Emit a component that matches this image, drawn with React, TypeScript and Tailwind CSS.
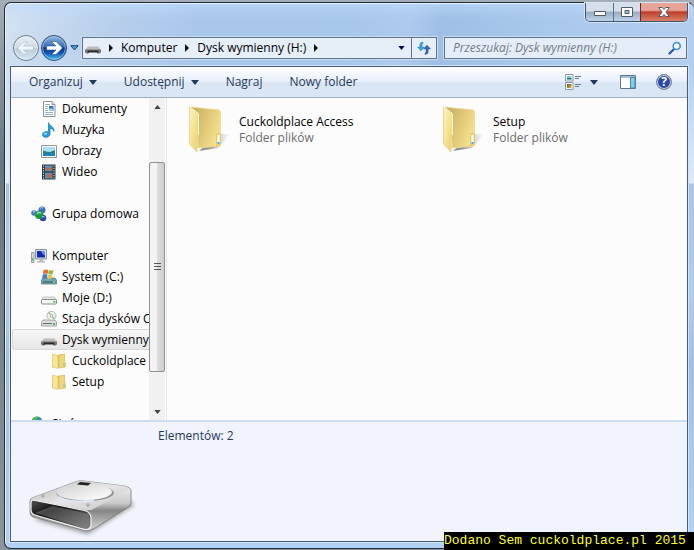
import type { ReactNode } from "react";

type IconName =
  | "document" | "music" | "picture" | "video" | "group" | "computer"
  | "system" | "disk" | "cd" | "removable" | "folder" | "network";

function DownArrow({ className }: { className: string }) {
  return (
    <svg viewBox="0 0 8 5" className={className} fill="currentColor" aria-hidden="true">
      <path d="M0 0H8L4 5Z" />
    </svg>
  );
}

function Crumb() {
  return (
    <svg viewBox="0 0 4 8" className="h-2 w-1 shrink-0" aria-hidden="true">
      <path d="M0 0L4 4L0 8Z" fill="#111" />
    </svg>
  );
}

const drawings: Record<IconName, ReactNode> = {
  document: (
    <>
      <path d="M2.500 .5H11L14 3.500V15.500H2.500Z" fill="#fff" stroke="#8b929a" />
      <path d="M11 .5V3.500H14" fill="#dde3e9" stroke="#8b929a" />
      <path d="M4 3.500H9M4 5.500H7M4 7.500H7M4 9.500H7M4 11.500H12M4 13.500H12" stroke="#9aaec4" />
      <path d="M8 5H12.500V10H8Z" fill="#3f78b8" />
      <path d="M8 8L10 7L12.500 9V10H8Z" fill="#9bcbea" />
    </>
  ),
  music: (
    <>
      <path d="M7.500 .5C8 4 13.500 4 13 9.500C12.500 8 11 6.500 9 6.500V12.500C8.500 16 1.500 16.500 1.500 12.500C2 9.500 5.500 9 7.500 10Z" fill="#279bdd" stroke="#1679bb" strokeWidth=".7" />
      <ellipse cx="4.500" cy="11.800" rx="1.800" ry="1.200" fill="#84d1f6" />
    </>
  ),
  picture: (
    <>
      <path d="M.5 2.500H15.500V14.500H.5Z" fill="#fff" stroke="#8d969f" />
      <path d="M2 4H14V13H2Z" fill="#a9e0f5" />
      <path d="M2 7.500L5 8.500L9 9L14 7V13H2Z" fill="#2b8170" />
      <path d="M2 10.500L14 9.500V13H2Z" fill="#237fbe" />
    </>
  ),
  video: (
    <>
      <path d="M1 .5H14.500V15.500H1Z" fill="#303941" />
      <path d="M4 1.500H11.500V7.300H4Z" fill="#4e99c9" />
      <path d="M4 8.700H11.500V14.500H4Z" fill="#4e99c9" />
      <path d="M5 3L8 4L11 2.500V7L8 5.500L5 7ZM5 13L7 9L9 11L11 9V13L8 14Z" fill="#be6546" />
      <path d="M2.500 1.500V15M13 1.500V15" stroke="#dce2e4" strokeDasharray="1.200 1.200" />
    </>
  ),
  group: (
    <>
      <path d="M3 7L11 4L12 12Z" fill="none" stroke="#9fb5ce" strokeWidth="2" />
      <circle cx="3" cy="7" r="2.800" fill="#4679c9" />
      <circle cx="11" cy="4" r="3.500" fill="#416fbe" />
      <circle cx="12" cy="12" r="3.300" fill="#294da7" />
      <circle cx="8" cy="9" r="4" fill="#1b9a3e" />
      <path d="M6 8Q7 5.500 10 7" fill="none" stroke="#9be899" strokeWidth="1.400" />
      <path d="M9 2.500Q10 1 12 2M2 6Q3 5 4 6M11 11Q12 10 13.500 11" fill="none" stroke="#c3dcfa" />
    </>
  ),
  computer: (
    <>
      <path d="M.5 4.500H3V14.500H.5Z" fill="#d7dcde" stroke="#969fa4" />
      <path d="M4.500 1.500H15.500V11H4.500Z" fill="#d8dfe5" stroke="#89949e" />
      <path d="M6 3H14V9.500H6Z" fill="#142cad" />
      <path d="M10 3H14V7.500Q11 6 10 3Z" fill="#6e91e5" />
      <path d="M8.500 11H12V13H14V14.500H6V13H8.500Z" fill="#b3bbc1" />
      <path d="M1.200 10H2.200V13H1.200Z" fill="#47b44f" />
    </>
  ),
  system: (
    <>
      <path d="M2 9H14L15.500 11V15H.5V11Z" fill="#76a3b4" stroke="#48727d" strokeWidth=".7" />
      <path d="M2 12H14.500V14H2Z" fill="#537985" />
      <path d="M12 12H14V14H12Z" fill="#61d963" />
      <path d="M2.500 1Q5 0 7.500 1L6.700 5Q4.500 4 2 5Z" fill="#e87036" />
      <path d="M8 1Q10 2 12.500 1L11.500 5Q9.500 6 7.200 5Z" fill="#8aba41" />
      <path d="M1.800 5.500Q4 4.500 6.500 5.500L5.700 9.500Q3.500 8.500 1 9.500Z" fill="#3c83c9" />
      <path d="M7 5.500Q9 6.500 11.500 5.500L10.500 9.500Q8.500 10.500 6.200 9.500Z" fill="#efc23b" />
    </>
  ),
  disk: (
    <>
      <path d="M3 7H13L15.500 9.500V13.500H.5V9.500Z" fill="#e4e6e6" stroke="#a5a8aa" strokeWidth=".6" />
      <path d="M1.500 9.500H14.500Q15.500 9.500 15.500 10.500V13Q15.500 14 14.500 14H1.500Q.5 14 .5 13V10.500Q.5 9.500 1.500 9.500Z" fill="#f3f4f4" stroke="#7f8589" strokeWidth=".9" />
      <path d="M12 11H14.500V12.500H12Z" fill="#43cf4c" />
    </>
  ),
  cd: (
    <>
      <path d="M2 9H14L15.500 11V15H.5V11Z" fill="#ddd" stroke="#888" strokeWidth=".7" />
      <path d="M2 12.500H11" stroke="#646a6c" />
      <path d="M12 12H14V14H12Z" fill="#49bf4a" />
      <circle cx="10.500" cy="4.800" r="4.500" fill="#edf0eb" stroke="#a4aba6" strokeWidth=".8" />
      <path d="M10.500 4.800L7 2L8.500 1ZM10.500 4.800L14 7L12.500 8.500Z" fill="#9cb8a1" />
      <circle cx="10.500" cy="4.800" r="1.300" fill="#fff" stroke="#888" strokeWidth=".7" />
    </>
  ),
  removable: (
    <>
      <path d="M3 6.500H13L16 10H0Z" fill="#bcbcbc" />
      <path d="M0 9.500H16V12.500L13.500 14L12.500 12H3.500L2.500 14L0 12.500Z" fill="#777" />
      <path d="M2.500 10.500H13.500L13 13.500L12 12.500H4L3 13.500Z" fill="#2b2b2b" />
    </>
  ),
  folder: (
    <>
      <path d="M6 2L13.500 1V14L6 15Z" fill="#e3c564" />
      <path d="M8 2L13.500 1V8.500L14.500 9.500V14L8 15Z" fill="#efd67a" stroke="#d2b760" strokeWidth=".6" />
      <path d="M1.500 1L7 2.500V15.500L1.500 14Z" fill="#f9e596" stroke="#d8bd66" strokeWidth=".6" />
      <path d="M12.500 10H13.500V13.500H12.500Z" fill="#7fbdd6" />
    </>
  ),
  network: (
    <>
      <circle cx="6" cy="6" r="5.500" fill="#2b8cc5" />
      <path d="M2 2Q6 -1 7 2L4 5L5 9Q1 8 .5 5ZM9 3L11 6L8 8Z" fill="#58ba4b" />
      <path d="M7 5H15.500V12H7Z" fill="#ccd5dc" stroke="#89949e" />
    </>
  ),
};

function SmallIcon({ name }: { name: IconName }) {
  return (
    <svg viewBox="0 0 16 16" className="size-4 shrink-0" aria-hidden="true">
      {drawings[name]}
    </svg>
  );
}

const tree: { name: string; icon: IconName; indent: string; selected?: boolean; gap?: boolean }[] = [
  { name: "Dokumenty", icon: "document", indent: "pl-[29px]" },
  { name: "Muzyka", icon: "music", indent: "pl-[29px]" },
  { name: "Obrazy", icon: "picture", indent: "pl-[29px]" },
  { name: "Wideo", icon: "video", indent: "pl-[29px]" },
  { name: "Grupa domowa", icon: "group", indent: "pl-[19px]", gap: true },
  { name: "Komputer", icon: "computer", indent: "pl-[19px]", gap: true },
  { name: "System (C:)", icon: "system", indent: "pl-[29px]" },
  { name: "Moje (D:)", icon: "disk", indent: "pl-[29px]" },
  { name: "Stacja dysków CD", icon: "cd", indent: "pl-[29px]" },
  { name: "Dysk wymienny (H:)", icon: "removable", indent: "pl-[29px]", selected: true },
  { name: "Cuckoldplace Access", icon: "folder", indent: "pl-[39px]" },
  { name: "Setup", icon: "folder", indent: "pl-[39px]" },
  { name: "Sieć", icon: "network", indent: "pl-[19px]", gap: true },
];

function WindowButtons() {
  return (
    <div className="mr-[6px] flex h-[19px] shrink-0 overflow-hidden rounded-b-[5px] border border-t-0 border-[#44566c] shadow-[0_0_0_1px_#d5e5f6]">
      <button aria-label="Minimalizuj" className="grid w-[27px] place-items-center bg-linear-to-b from-[#d6e0ec] from-45% via-[#98acc3] via-50% to-[#bdd1e8]">
        <svg viewBox="0 0 12 10" className="h-[10px] w-3"><path d="M.5 4.500H11.500V8.500H.5Z" fill="#fff" stroke="#535966" /></svg>
      </button>
      <button aria-label="Maksymalizuj" className="grid w-[27px] place-items-center border-l border-[#5d6f84] bg-linear-to-b from-[#d6e0ec] from-45% via-[#98acc3] via-50% to-[#bdd1e8]">
        <svg viewBox="0 0 12 10" className="h-[10px] w-3"><path d="M.5 .5H11.500V9.500H.5Z" fill="#fff" stroke="#535966" /><path d="M4 3.500H8V6.500H4Z" fill="#a9bbd0" stroke="#535966" /></svg>
      </button>
      <button aria-label="Zamknij" className="grid w-[47px] place-items-center border-l border-[#5a2d2b] bg-linear-to-b from-[#e6a497] from-40% via-[#bd3e29] via-50% to-[#d88068]">
        <svg viewBox="0 0 12 10" className="h-[10px] w-3"><path d="M.8 .5H4.300L6 2.500L7.700 .5H11.200L8 5L11.200 9.500H7.700L6 7.500L4.300 9.500H.8L4 5Z" fill="#fff" stroke="#555d70" /></svg>
      </button>
    </div>
  );
}

function NavButtons() {
  return (
    <div className="flex shrink-0 items-center">
      <button aria-label="Wstecz">
        <svg viewBox="0 0 28 28" className="size-7">
          <defs>
            <linearGradient id="backFill" x2="0" y2="1"><stop stopColor="#e6edf5" /><stop offset=".48" stopColor="#d3dce6" /><stop offset=".52" stopColor="#bccbd9" /><stop offset="1" stopColor="#d7e7f5" /></linearGradient>
          </defs>
          <circle cx="14" cy="14" r="12.500" fill="url(#backFill)" stroke="#687b91" />
          <circle cx="14" cy="14" r="11.300" fill="none" stroke="#eff5fb" opacity=".6" />
          <path d="M5.500 14L11.500 8H15.500L11.500 12H21.500V16H11.500L15.500 20H11.500Z" fill="#edf3f9" stroke="#b9c7d5" strokeWidth=".8" />
        </svg>
      </button>
      <button aria-label="Dalej">
        <svg viewBox="0 0 28 28" className="size-7">
          <defs>
            <linearGradient id="forwardFill" x2="0" y2="1"><stop stopColor="#94b9e6" /><stop offset=".45" stopColor="#376bb5" /><stop offset=".5" stopColor="#08328e" /><stop offset=".72" stopColor="#145cba" /><stop offset="1" stopColor="#4dd0fa" /></linearGradient>
          </defs>
          <circle cx="14" cy="14" r="12.500" fill="url(#forwardFill)" stroke="#344e78" />
          <circle cx="14" cy="14" r="11.300" fill="none" stroke="#a6cbed" opacity=".7" />
          <path d="M22.500 14L16 7.500H11.500L16 12H6.500V16H16L11.500 20.500H16Z" fill="#fff" stroke="#1e4381" strokeWidth=".5" />
        </svg>
      </button>
      <button aria-label="Ostatnie strony" className="px-[2px]">
        <svg viewBox="0 0 9 6" className="h-[6px] w-[9px]"><path d="M.8 .7H8.200L4.500 5Z" fill="#4aa4db" stroke="#173f75" /></svg>
      </button>
    </div>
  );
}

function AddressBar() {
  return (
    <div className="flex h-[22px] min-w-0 grow border border-[#60758c] bg-[#e6eef8] shadow-[0_0_0_1px_#c8dbf1]">
      <div className="flex min-w-0 grow items-center overflow-hidden whitespace-nowrap pl-[2px]">
        <SmallIcon name="removable" />
        <span className="ml-[8px] flex items-center gap-[8px]">
          <Crumb />
          <button>Komputer</button>
          <Crumb />
          <button>Dysk wymienny (H:)</button>
          <Crumb />
        </span>
      </div>
      <button aria-label="Poprzednie lokalizacje" className="px-[6px] text-[#000060]"><DownArrow className="h-[4px] w-[7px]" /></button>
      <button aria-label="Odśwież" className="grid w-[25px] shrink-0 place-items-center border-l border-[#60758c]">
        <svg viewBox="0 0 16 16" className="size-4">
          <path d="M7 2Q3.800 2 3.800 5V7H1.500L5 11L8.500 7H6V5Q6 4 7 3.500Z" fill="#39a5df" stroke="#1a71ab" strokeWidth=".4" />
          <path d="M9 14.500Q12.200 14.500 12.200 11.500V9H14.500L11 5L7.500 9H10V11.500Q10 12.500 9 13Z" fill="#3769b4" stroke="#244b94" strokeWidth=".4" />
        </svg>
      </button>
    </div>
  );
}

function SearchBox() {
  return (
    <div className="flex h-[22px] min-w-0 grow-[229] basis-0 items-center border border-[#60758c] bg-[#e5edf8] pr-1 pl-2 shadow-[0_0_0_1px_#c8dbf1]">
      <input type="text" aria-label="Szukaj" placeholder="Przeszukaj: Dysk wymienny (H:)" className="h-5 min-w-0 grow bg-transparent leading-5 italic outline-none placeholder:text-[#757c86]" />
      <svg viewBox="0 0 14 14" className="size-[14px] shrink-0" aria-hidden="true">
        <path d="M1.500 12.500L6 8" stroke="#2b53a3" strokeWidth="2.200" strokeLinecap="round" />
        <circle cx="8.700" cy="5" r="3.500" fill="#f3fbff" stroke="#3a91d3" strokeWidth="1.600" />
      </svg>
    </div>
  );
}

function Toolbar() {
  return (
    <div className="flex h-[31px] shrink-0 items-center border-b border-[#a0afc3] bg-linear-to-b from-[#fafcff] from-10% via-[#e8effa] via-48% to-[#dbe6f4] to-52% pr-[15px] pl-[18px] whitespace-nowrap text-[#1e395b]">
      <div className="flex items-center gap-[27px]">
        <button className="flex items-center gap-[6px]">Organizuj <DownArrow className="h-[5px] w-2" /></button>
        <button className="flex items-center gap-[6px]">Udostępnij <DownArrow className="h-[5px] w-2" /></button>
        <button>Nagraj</button>
        <button>Nowy folder</button>
      </div>
      <div className="ml-auto flex items-center gap-[20px]">
        <div className="flex items-center gap-[7px]">
          <button aria-label="Zmień widok">
            <svg viewBox="0 0 16 16" className="size-4">
              <path d="M.5 .5H8V7H.5ZM.5 8.500H8V15.500H.5Z" fill="#fff" stroke="#8b98a8" />
              <path d="M2 2H6.500V4H2Z" fill="#7cc9e7" /><path d="M2 4H6.500V5.500H2Z" fill="#206c69" />
              <path d="M2 10H4V12H2Z" fill="#d84939" /><path d="M4 10H6.500V12H4Z" fill="#6aa534" /><path d="M2 12H4V14H2Z" fill="#5a9f37" /><path d="M4 12H6.500V14H4Z" fill="#e39c2e" />
              <path d="M10 2.500H16M10 4.500H14M10 10.500H16M10 12.500H14" stroke="#657991" />
            </svg>
          </button>
          <button aria-label="Więcej opcji" className="px-[2px]"><DownArrow className="h-[5px] w-2" /></button>
        </div>
        <button aria-label="Pokaż okienko podglądu">
          <svg viewBox="0 0 16 14" className="h-[14px] w-4"><path d="M.5 .5H15.500V13.500H.5Z" fill="#fff" stroke="#5c7590" /><path d="M1 1H15V3H1Z" fill="#a9bfd5" /><path d="M10.500 2.500H15V13H10.500Z" fill="#81d0ea" stroke="#4a89ad" /></svg>
        </button>
        <button aria-label="Pomoc" className="grid size-4 place-items-center rounded-full border border-[#858ca1] bg-[#2748a5] text-[12px] leading-none font-bold text-white shadow-[inset_0_0_0_1px_#c7d0e5]">?</button>
      </div>
    </div>
  );
}

function Tree() {
  return (
    <nav aria-label="Foldery" className="w-[138px] shrink-0 pl-px">
      <ul className="h-full overflow-hidden">
        {tree.map((row) => (
          <li key={row.name} className={row.gap ? "mt-[21px]" : ""}>
            <button
              className={`flex h-[21px] w-[180px] items-center gap-[5px] whitespace-nowrap ${row.indent} ${
                row.selected ? "rounded-[3px] bg-linear-to-b from-[#f8f8f8] to-[#e5e5e5] shadow-[inset_0_0_0_1px_#d9d9d9]" : ""
              }`}
            >
              <SmallIcon name={row.icon} />
              {row.name}
            </button>
          </li>
        ))}
      </ul>
    </nav>
  );
}

function ScrollBar() {
  return (
    <div className="mr-px flex w-[16px] shrink-0 flex-col bg-[#f1f1f1]">
      <button aria-label="W górę" className="grid h-[17px] shrink-0 place-items-center text-[#444]"><DownArrow className="h-[4px] w-[7px] rotate-180" /></button>
      <div className="grow-[47] basis-0" />
      <div className="flex grow-[210] basis-0 flex-col items-center justify-center gap-[2px] rounded-[2px] border border-[#8f8f8f] bg-linear-to-r from-[#f4f4f4] from-45% via-[#dcdcdc] via-55% to-[#cfcfcf]">
        <i className="h-px w-[7px] bg-[#555]" />
        <i className="h-px w-[7px] bg-[#555]" />
        <i className="h-px w-[7px] bg-[#555]" />
      </div>
      <div className="grow-[31] basis-0" />
      <button aria-label="W dół" className="grid h-[17px] shrink-0 place-items-center text-[#444]"><DownArrow className="h-[4px] w-[7px]" /></button>
    </div>
  );
}

function FolderGradients() {
  return (
    <svg className="absolute size-0" aria-hidden="true">
      <defs>
        <linearGradient id="folderFront" x2="1" y2="1"><stop stopColor="#fbf3c6" /><stop offset=".5" stopColor="#f6e391" /><stop offset="1" stopColor="#e8cc66" /></linearGradient>
        <linearGradient id="folderInside" x2="1" y2=".5"><stop stopColor="#c2a95c" /><stop offset=".5" stopColor="#dcc473" /><stop offset="1" stopColor="#f3e08d" /></linearGradient>
        <linearGradient id="folderShade"><stop offset=".3" stopColor="#666" stopOpacity=".7" /><stop offset="1" stopColor="#999" stopOpacity="0" /></linearGradient>
      </defs>
    </svg>
  );
}

function FolderItem({ name }: { name: string }) {
  return (
    <button className="flex h-[48px] w-[200px] items-center text-left whitespace-nowrap">
      <svg viewBox="0 0 44 48" className="h-[48px] w-[44px] shrink-0" aria-hidden="true">
        <path d="M11 45L30 42L42 28L30 28Z" fill="url(#folderShade)" />
        <path d="M3 1L31 4Q32.500 4.500 32.500 6V40L10 42L9 8Z" fill="url(#folderInside)" stroke="#ecdb92" strokeWidth=".8" />
        <path d="M1.500 1L10.500 8V30L9 31V46L1.500 38Z" fill="url(#folderFront)" stroke="#e4d085" strokeWidth=".8" />
        <path d="M2.500 1.500L10.500 7.500V29" fill="none" stroke="#fffae0" />
        <path d="M28.500 28Q32.500 26 32.500 30V38L28.500 40Z" fill="#f0dc85" stroke="#d9bf62" strokeWidth=".7" />
        <path d="M29.500 29H31.500V38H29.500Z" fill="#fff" />
        <path d="M29.500 36H31.500V38H29.500Z" fill="#4a9fed" />
      </svg>
      <span className="ml-[7px] leading-[16px]">
        <span className="block">{name}</span>
        <span className="block text-[#6d6d6d]">Folder plików</span>
      </span>
    </button>
  );
}

function DriveIcon() {
  return (
    <svg viewBox="0 0 116 62" className="h-[62px] w-[116px] shrink-0" aria-hidden="true">
      <defs>
        <linearGradient id="driveTop" x2="1" y2="1"><stop stopColor="#b5b5b5" /><stop offset=".5" stopColor="#e6e6e6" /><stop offset="1" stopColor="#c4c4c4" /></linearGradient>
        <linearGradient id="driveSide" x2="0" y2="1"><stop stopColor="#fafafa" /><stop offset=".45" stopColor="#c9c9c9" /><stop offset=".6" stopColor="#858585" /><stop offset="1" stopColor="#d8d8d8" /></linearGradient>
        <linearGradient id="driveInside" x2="1" y2="1"><stop stopColor="#555" /><stop offset=".35" stopColor="#0c0c0c" /><stop offset="1" stopColor="#888" /></linearGradient>
        <linearGradient id="driveDisc" x2="1" y2="1"><stop stopColor="#d0d0d0" /><stop offset="1" stopColor="#fff" /></linearGradient>
        <filter id="driveBlur"><feGaussianBlur stdDeviation="2" /></filter>
      </defs>
      <path d="M7 42L62 57L108 28L102 22Z" fill="#555" opacity=".6" filter="url(#driveBlur)" />
      <path d="M6 21L49 5Q53 3 58 4L98 9Q105 10 105 14V26Q105 29 101 31L69 51Q64 55 57 53L7 40Q4 39 4 35V24Q4 22 6 21Z" fill="url(#driveSide)" stroke="#777" strokeWidth=".8" />
      <path d="M6 21L49 5Q53 3 58 4L98 9Q104 10 102 13L69 31Q65 34 59 33L8 23Q5 22 6 21Z" fill="url(#driveTop)" />
      <ellipse cx="59" cy="16" rx="29" ry="8" fill="#8f9499" />
      <ellipse cx="58" cy="15" rx="28" ry="8" fill="url(#driveDisc)" />
      <path d="M33 20Q45 27 68 23" fill="none" stroke="#dce8f6" strokeWidth="2" />
      <path d="M54 5L65 6L62 8.500L51 7.500Z" fill="#222" />
      <path d="M7 23L56 33Q64 34 65 40V48Q64 54 57 52L9 38Q5 37 5 33V26Q5 23 7 23Z" fill="url(#driveInside)" stroke="#f4f4f4" strokeWidth="1.200" />
      <path d="M9 36L27 29L63 37V48L58 51Z" fill="#8b8b8b" opacity=".45" />
      <circle cx="17" cy="19" r="1.300" fill="#ddd" stroke="#777" strokeWidth=".6" /><circle cx="62" cy="28" r="1.300" fill="#ddd" stroke="#777" strokeWidth=".6" />
    </svg>
  );
}

export default function App() {
  return (
    <div className="flex h-screen flex-col overflow-hidden bg-linear-to-b from-[#a4adb8] from-0% via-[#697580] via-30% to-[#89949f] pt-[2px] pb-px pl-[4px] font-['Open_Sans','Noto_Sans',sans-serif] text-[12px] leading-[16px] text-black">
      <div className="flex min-h-0 grow flex-col rounded-t-[7px] rounded-bl-[7px] border-y border-l border-[#202a35] bg-[linear-gradient(180deg,transparent_60px,rgba(240,247,255,0.7)_180px,#a6c6ea_181px,#aecdf0_290px,#9fc0e6_360px,#b2d1f3_100%),linear-gradient(180deg,rgba(190,220,255,0.6)_0px,transparent_16px),linear-gradient(100deg,#d3e1f2_0%,#b8cfeb_14%,#a9c7eb_25%,#a8c7ec_45%,#aecbed_52%,#9fbfe6_56%,#a9c8ed_70%,#b8d2ef_100%)] pl-px shadow-[inset_1px_1px_0_#e8f3ff]">
        <div className="flex h-[31px] shrink-0 items-start justify-end"><WindowButtons /></div>
        <header className="mb-[4px] flex h-[28px] shrink-0 items-center gap-[7px] pr-[7px] pl-[6px]">
          <div className="flex min-w-0 grow-[425] basis-0 items-center gap-px"><NavButtons /><AddressBar /></div>
          <SearchBox />
        </header>
        <main className="mr-[6px] mb-[6px] ml-[4px] flex min-h-0 grow flex-col border border-[#4b5c70] bg-[#fcfcfc] shadow-[0_0_0_1px_#d1e3f7]">
          <Toolbar />
          <div className="flex min-h-0 grow">
            <Tree />
            <ScrollBar />
            <section aria-label="Pliki" className="flex min-w-0 grow flex-wrap content-start gap-x-[54px] border-l border-[#dbe8f5] bg-[#fcfcfc] pt-[8px] pl-[21px]">
              <FolderGradients />
              <FolderItem name="Cuckoldplace Access" />
              <FolderItem name="Setup" />
            </section>
          </div>
          <footer className="flex h-[121px] shrink-0 items-start border-t-2 border-[#cfdcef] bg-[#f1f4fc] pl-[15px] text-[#1e395b]">
            <div className="mt-[55px]"><DriveIcon /></div>
            <p className="mt-[6px] ml-[16px]">Elementów: 2</p>
          </footer>
        </main>
      </div>
      <p className="fixed right-0 bottom-0 h-[18px] w-[250px] bg-black font-['Liberation_Mono',monospace] text-[13px] leading-[17px] whitespace-nowrap text-[#ffff22]">Dodano Sem cuckoldplace.pl 2015</p>
    </div>
  );
}
